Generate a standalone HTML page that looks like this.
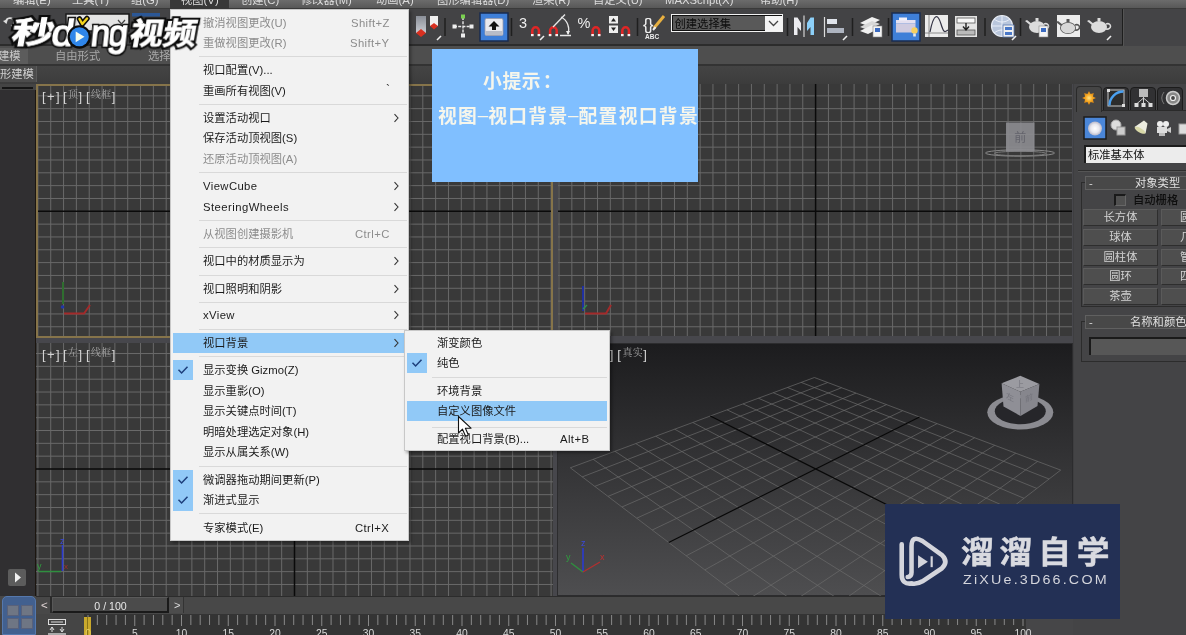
<!DOCTYPE html><html lang="zh"><head><meta charset="utf-8"><title>3ds Max</title><style>
*{box-sizing:border-box}
html,body{margin:0;padding:0}
body{width:1186px;height:635px;overflow:hidden;position:relative;background:#444446;font-family:"Liberation Sans","Noto Sans CJK SC",sans-serif;font-size:12px;color:#ddd}
.a{position:absolute}
.t,.mi,.sc,.btn,svg{will-change:transform}
.t{position:absolute;white-space:nowrap;line-height:1}
.mi{position:absolute;left:203px;white-space:nowrap;font-size:11.3px;line-height:14px;height:14px;color:#1b1b1b}
.dis{color:#8c8c8c !important}
.sc{position:absolute;right:19px;white-space:nowrap;letter-spacing:0.4px;font-size:11.3px;line-height:14px;height:14px;color:#1b1b1b}
.sep{position:absolute;left:199px;width:208px;height:1px;background:#d9d9d9}
.chk{position:absolute;background:#91c9f7}
.btn{position:absolute;background:#4e4e4e;border-top:1px solid #5c5c5c;border-left:1px solid #5a5a5a;border-bottom:1px solid #2e2e2e;border-right:1px solid #2e2e2e;color:#d2d2d2;font-size:11.3px;line-height:14px;text-align:center;white-space:nowrap;overflow:hidden}
</style></head><body><div id="root" style="position:absolute;left:0;top:0;width:1186px;height:635px;overflow:hidden;"><div class="a" style="left:0;top:0;width:1186px;height:8px;background:linear-gradient(#6c6c6c,#585858)"></div><div class="a" style="left:0;top:8px;width:1186px;height:1px;background:#3a3a3a"></div><div class="a" style="left:170px;top:0;width:59px;height:9px;background:#383838"></div><div class="t" style="left:13px;top:-7.4px;font-size:11.3px;line-height:14px;color:#dcdcdc">编辑(E)</div><div class="t" style="left:72px;top:-7.4px;font-size:11.3px;line-height:14px;color:#dcdcdc">工具(T)</div><div class="t" style="left:131px;top:-7.4px;font-size:11.3px;line-height:14px;color:#dcdcdc">组(G)</div><div class="t" style="left:181px;top:-7.4px;font-size:11.3px;line-height:14px;color:#dcdcdc">视图(V)</div><div class="t" style="left:241px;top:-7.4px;font-size:11.3px;line-height:14px;color:#dcdcdc">创建(C)</div><div class="t" style="left:301px;top:-7.4px;font-size:11.3px;line-height:14px;color:#dcdcdc">修改器(M)</div><div class="t" style="left:376px;top:-7.4px;font-size:11.3px;line-height:14px;color:#dcdcdc">动画(A)</div><div class="t" style="left:437px;top:-7.4px;font-size:11.3px;line-height:14px;color:#dcdcdc">图形编辑器(D)</div><div class="t" style="left:532px;top:-7.4px;font-size:11.3px;line-height:14px;color:#dcdcdc">渲染(R)</div><div class="t" style="left:593px;top:-7.4px;font-size:11.3px;line-height:14px;color:#dcdcdc">自定义(U)</div><div class="t" style="left:665px;top:-7.4px;font-size:11.3px;line-height:14px;color:#dcdcdc">MAXScript(X)</div><div class="t" style="left:760px;top:-7.4px;font-size:11.3px;line-height:14px;color:#dcdcdc">帮助(H)</div><div class="a" style="left:0;top:9px;width:1123px;height:36px;background:#434345"></div><div class="a" style="left:0;top:44px;width:1123px;height:2px;background:#2c2c2c"></div><div class="a" style="left:1121.5px;top:9px;width:1.5px;height:36px;background:#1e1e1e"></div><div class="a" style="left:1123px;top:9px;width:63px;height:37px;background:#444446;border-left:1px solid #545454"></div><div class="a" style="left:0;top:46px;width:1186px;height:18px;background:#4e4e4e"></div><div class="a" style="left:0;top:64px;width:1186px;height:2px;background:#333"></div><div class="a" style="left:0;top:66px;width:1186px;height:18px;background:linear-gradient(#444,#3c3c3c)"></div><div class="a" style="left:0;top:48px;width:28px;height:16px;background:#5c5c5c"></div><div class="t" style="left:-2.5px;top:49px;font-size:11.3px;line-height:14px;color:#c8c8c8">建模</div><div class="t" style="left:55px;top:49px;font-size:11.3px;line-height:14px;color:#a8a8a8">自由形式</div><div class="t" style="left:148px;top:49px;font-size:11.3px;line-height:14px;color:#a8a8a8">选择</div><div class="a" style="left:0;top:66px;width:37px;height:16px;background:#4c4c4c;border-right:1px solid #5a5a5a"></div><div class="t" style="left:-0.5px;top:67px;font-size:11.3px;line-height:14px;color:#cfcfcf">形建模</div><div class="a" style="left:0;top:84px;width:36px;height:514px;background:#444"></div><div class="a" style="left:0;top:90px;width:36px;height:507px;background:#1c1610"></div><div class="a" style="left:0;top:90px;width:34.5px;height:507px;background:#302f31"></div><div class="a" style="left:2px;top:87px;width:31px;height:2px;background:#151515"></div><div class="a" style="left:8px;top:569px;width:18px;height:17px;background:#5c5c5c;border-radius:2px"></div><svg class="a" style="left:8px;top:569px" width="18" height="17"><path d="M7 3.5 L13 8.5 L7 13.5 Z" fill="#f0f0f0"/></svg><svg class="a" style="left:0;top:0" width="1186" height="635" viewBox="0 0 1186 635"><defs><linearGradient id="pg" x1="0" y1="0" x2="0" y2="1"><stop offset="0" stop-color="#1c1c1e"/><stop offset="1" stop-color="#4e4e50"/></linearGradient><clipPath id="cbr"><rect x="558" y="344" width="514" height="252"/></clipPath></defs><rect x="36" y="84" width="1038" height="514" fill="#47474c"/><rect x="36" y="84" width="517" height="254" fill="#393939"/><path d="M37.90 84V338M50.73 84V338M63.56 84V338M76.39 84V338M89.22 84V338M102.05 84V338M114.88 84V338M127.71 84V338M140.54 84V338M153.37 84V338M166.20 84V338M179.03 84V338M191.86 84V338M204.69 84V338M217.52 84V338M230.35 84V338M243.18 84V338M256.01 84V338M268.84 84V338M281.67 84V338M307.33 84V338M320.16 84V338M332.99 84V338M345.82 84V338M358.65 84V338M371.48 84V338M384.31 84V338M397.14 84V338M409.97 84V338M422.80 84V338M435.63 84V338M448.46 84V338M461.29 84V338M474.12 84V338M486.95 84V338M499.78 84V338M512.61 84V338M525.44 84V338M538.27 84V338M551.10 84V338M36 95.83H553M36 108.66H553M36 121.49H553M36 134.32H553M36 147.15H553M36 159.98H553M36 172.81H553M36 185.64H553M36 198.47H553M36 224.13H553M36 236.96H553M36 249.79H553M36 262.62H553M36 275.45H553M36 288.28H553M36 301.11H553M36 313.94H553M36 326.77H553" stroke="#696969" stroke-width="1" fill="none"/><path d="M36 211.3H553M294.5 84V338" stroke="#0a0a0a" stroke-width="1.5" fill="none"/><rect x="37" y="85" width="515" height="252" fill="none" stroke="#86744a" stroke-width="2"/><rect x="558" y="84" width="514" height="252" fill="#393939"/><path d="M559.00 84V336M571.83 84V336M584.66 84V336M597.49 84V336M610.32 84V336M623.15 84V336M635.98 84V336M648.81 84V336M661.64 84V336M674.47 84V336M687.30 84V336M700.13 84V336M712.96 84V336M725.79 84V336M738.62 84V336M751.45 84V336M764.28 84V336M777.11 84V336M789.94 84V336M802.77 84V336M828.43 84V336M841.26 84V336M854.09 84V336M866.92 84V336M879.75 84V336M892.58 84V336M905.41 84V336M918.24 84V336M931.07 84V336M943.90 84V336M956.73 84V336M969.56 84V336M982.39 84V336M995.22 84V336M1008.05 84V336M1020.88 84V336M1033.71 84V336M1046.54 84V336M1059.37 84V336M558 95.83H1072M558 108.66H1072M558 121.49H1072M558 134.32H1072M558 147.15H1072M558 159.98H1072M558 172.81H1072M558 185.64H1072M558 198.47H1072M558 224.13H1072M558 236.96H1072M558 249.79H1072M558 262.62H1072M558 275.45H1072M558 288.28H1072M558 301.11H1072M558 313.94H1072M558 326.77H1072" stroke="#696969" stroke-width="1" fill="none"/><path d="M558 211.3H1072M815.6 84V336" stroke="#0a0a0a" stroke-width="1.5" fill="none"/><rect x="36" y="343" width="517" height="253" fill="#393939"/><path d="M37.90 343V596M50.73 343V596M63.56 343V596M76.39 343V596M89.22 343V596M102.05 343V596M114.88 343V596M127.71 343V596M140.54 343V596M153.37 343V596M166.20 343V596M179.03 343V596M191.86 343V596M204.69 343V596M217.52 343V596M230.35 343V596M243.18 343V596M256.01 343V596M268.84 343V596M281.67 343V596M307.33 343V596M320.16 343V596M332.99 343V596M345.82 343V596M358.65 343V596M371.48 343V596M384.31 343V596M397.14 343V596M409.97 343V596M422.80 343V596M435.63 343V596M448.46 343V596M461.29 343V596M474.12 343V596M486.95 343V596M499.78 343V596M512.61 343V596M525.44 343V596M538.27 343V596M551.10 343V596M36 353.53H553M36 366.36H553M36 379.19H553M36 392.02H553M36 404.85H553M36 417.68H553M36 430.51H553M36 443.34H553M36 456.17H553M36 481.83H553M36 494.66H553M36 507.49H553M36 520.32H553M36 533.15H553M36 545.98H553M36 558.81H553M36 571.64H553M36 584.47H553" stroke="#696969" stroke-width="1" fill="none"/><path d="M36 469H553M294.5 343V596" stroke="#0a0a0a" stroke-width="1.5" fill="none"/><rect x="557" y="343" width="516" height="253.500" fill="#2c2c2e"/><rect x="558" y="344" width="514" height="251" fill="url(#pg)"/><g clip-path="url(#cbr)"><path d="M814.4 377.5L570.3 467.8M814.4 377.5L1060.7 470.1M827.7 382.5L582.2 476.9M801.2 382.4L1049.1 479.0M841.6 387.7L594.8 486.4M787.5 387.5L1036.8 488.4M856.0 393.1L608.0 496.4M773.2 392.7L1024.0 498.3M870.9 398.8L621.9 507.0M758.4 398.2L1010.4 508.8M886.5 404.6L636.7 518.2M743.0 403.9L996.0 519.8M902.7 410.7L652.2 530.0M727.0 409.8L980.9 531.4M937.1 423.6L686.2 555.8M692.9 422.5L947.7 556.9M955.5 430.5L704.8 569.9M674.7 429.2L929.6 570.8M974.7 437.7L724.6 584.9M655.7 436.2L910.3 585.7M994.7 445.3L745.7 600.9M635.8 443.6L889.7 601.5M1015.7 453.2L768.3 618.1M615.0 451.3L867.6 618.5M1037.6 461.4L792.5 636.5M593.2 459.3L843.9 636.7M1060.7 470.1L818.5 656.2M570.3 467.8L818.5 656.2" stroke="#6c6c6c" stroke-width="0.7" fill="none"/><path d="M919.5 417.0L668.7 542.5M710.3 416.0L964.8 543.8" stroke="#080808" stroke-width="1.2" fill="none"/></g><ellipse cx="1020.3" cy="412.3" rx="33" ry="17.3" fill="#8b8b91"/><ellipse cx="1020.3" cy="411.3" rx="25.5" ry="13" fill="#26262a"/><path d="M1020.3 375.8L1039.4 384L1020.3 391.8L1001.6 383.3Z" fill="#9b9ba1"/><path d="M1001.6 383.3L1020.3 391.8L1020.5 416L1003.5 406.6Z" fill="#8f8f96"/><path d="M1039.4 384L1020.3 391.8L1020.5 416L1037.5 406Z" fill="#86868d"/><g font-family='"Liberation Sans","Noto Sans CJK SC",sans-serif' font-size="8" fill="#74747c"><text x="1016" y="386.5" transform="rotate(0)">上</text><text transform="translate(1006,398) skewY(27)">左</text><text transform="translate(1025,402.5) skewY(-24)">前</text></g><ellipse cx="1020" cy="153" rx="34.5" ry="3.2" fill="none" stroke="#8a8a8a" stroke-width="1"/><ellipse cx="1020" cy="153.5" rx="26" ry="2.2" fill="none" stroke="#7a7a7a" stroke-width="1"/><rect x="1006" y="122.5" width="28.5" height="29" fill="#8e8e93" fill-opacity="0.88"/><text x="1020.3" y="142" font-size="12" text-anchor="middle" fill="#64646c" font-family='"Liberation Sans","Noto Sans CJK SC",sans-serif'>前</text><path d="M63 304V282" stroke="#2f6e2f" stroke-width="2" fill="none"/><path d="M64 313.5H84L90 305" stroke="#a32a2a" stroke-width="2" fill="none"/><circle cx="62.5" cy="307" r="1.8" fill="#2038a8"/><path d="M583 311V286" stroke="#2030a0" stroke-width="2" fill="none"/><path d="M585 313.5H606L611 305" stroke="#a32a2a" stroke-width="2" fill="none"/><path d="M583 309L587 305" stroke="#2f8e4f" stroke-width="1.5"/><path d="M62.5 571V545" stroke="#2a3ad0" stroke-width="1.6" fill="none"/><path d="M38.5 571.5H61" stroke="#2f8f3f" stroke-width="1.5" fill="none"/><text x="37" y="569" font-size="9" fill="#2f9f3f" font-family='"Liberation Sans","Noto Sans CJK SC",sans-serif'>y</text><text x="60" y="544" font-size="9" fill="#3a4ae0" font-family='"Liberation Sans","Noto Sans CJK SC",sans-serif'>z</text><text x="64" y="569" font-size="8" fill="#a03030" font-family='"Liberation Sans","Noto Sans CJK SC",sans-serif'>x</text><path d="M583 572V548" stroke="#2a3ad0" stroke-width="1.6" fill="none"/><path d="M583 572L571 563" stroke="#2f8f3f" stroke-width="1.4" fill="none"/><path d="M583 572L600 562" stroke="#b03030" stroke-width="1.4" fill="none"/><text x="581" y="546" font-size="9" fill="#3a4ae0" font-family='"Liberation Sans","Noto Sans CJK SC",sans-serif'>z</text><text x="566" y="560" font-size="9" fill="#2f9f3f" font-family='"Liberation Sans","Noto Sans CJK SC",sans-serif'>y</text><text x="600" y="560" font-size="9" fill="#c03030" font-family='"Liberation Sans","Noto Sans CJK SC",sans-serif'>x</text></svg><div class="t" style="left:41.5px;top:88.5px;font-size:13px;line-height:15px;color:#d4d4d4;letter-spacing:1.4px">[+]<span style="margin-left:2px">[</span><span style="font-size:10px;position:relative;top:-3px;color:#a6a6a6;letter-spacing:0.4px;font-family:'Liberation Serif','Noto Serif CJK SC',serif">顶</span>]<span style="margin-left:2.5px">[</span><span style="font-size:10px;position:relative;top:-3px;color:#a6a6a6;letter-spacing:0.4px;font-family:'Liberation Serif','Noto Serif CJK SC',serif">线框</span>]</div><div class="t" style="left:561px;top:89px;font-size:13px;line-height:15px;color:#d4d4d4;letter-spacing:1.4px">[+]<span style="margin-left:2px">[</span><span style="font-size:10px;position:relative;top:-3px;color:#a6a6a6;letter-spacing:0.4px;font-family:'Liberation Serif','Noto Serif CJK SC',serif">前</span>]<span style="margin-left:2.5px">[</span><span style="font-size:10px;position:relative;top:-3px;color:#a6a6a6;letter-spacing:0.4px;font-family:'Liberation Serif','Noto Serif CJK SC',serif">线框</span>]</div><div class="t" style="left:41.5px;top:346.5px;font-size:13px;line-height:15px;color:#d4d4d4;letter-spacing:1.4px">[+]<span style="margin-left:2px">[</span><span style="font-size:10px;position:relative;top:-3px;color:#a6a6a6;letter-spacing:0.4px;font-family:'Liberation Serif','Noto Serif CJK SC',serif">左</span>]<span style="margin-left:2.5px">[</span><span style="font-size:10px;position:relative;top:-3px;color:#a6a6a6;letter-spacing:0.4px;font-family:'Liberation Serif','Noto Serif CJK SC',serif">线框</span>]</div><div class="t" style="left:563px;top:346.5px;font-size:13px;line-height:15px;color:#d4d4d4;letter-spacing:1.4px">[+]<span style="margin-left:2px">[</span><span style="font-size:10px;position:relative;top:-3px;color:#a6a6a6;letter-spacing:0.4px;font-family:'Liberation Serif','Noto Serif CJK SC',serif">透视</span>]<span style="margin-left:2.5px">[</span><span style="font-size:10px;position:relative;top:-3px;color:#a6a6a6;letter-spacing:0.4px;font-family:'Liberation Serif','Noto Serif CJK SC',serif">真实</span>]</div><div class="a" style="left:1073px;top:84px;width:113px;height:551px;background:#444446"></div><div class="a" style="left:1073px;top:84px;width:1px;height:514px;background:#3e3e40"></div><div class="a" style="left:1076px;top:86px;width:26px;height:26px;background:#454545;border:1px solid #2a2a2a;border-bottom:none;border-radius:4px 4px 0 0"></div><div class="a" style="left:1103px;top:87px;width:26px;height:24px;background:#313133;border:1.5px solid #1c1c1c;border-radius:4px 4px 0 0"></div><div class="a" style="left:1130px;top:87px;width:26px;height:24px;background:#313133;border:1.5px solid #1c1c1c;border-radius:4px 4px 0 0"></div><div class="a" style="left:1157px;top:87px;width:26px;height:24px;background:#313133;border:1.5px solid #1c1c1c;border-radius:4px 4px 0 0"></div><div class="a" style="left:1102px;top:110px;width:84px;height:1px;background:#2a2a2a"></div><svg class="a" style="left:1073px;top:84px" width="113" height="60" viewBox="1073 84 113 60"><defs><radialGradient id="sg"><stop offset="0" stop-color="#ffe58a"/><stop offset="0.5" stop-color="#f6a823"/><stop offset="1" stop-color="#c97812"/></radialGradient><radialGradient id="sph"><stop offset="0" stop-color="#ffffff"/><stop offset="0.6" stop-color="#e8e8ee"/><stop offset="1" stop-color="#b8b8c8"/></radialGradient></defs><polygon points="1089.0,91.0 1090.6,94.1 1093.9,93.1 1092.9,96.4 1096.0,98.0 1092.9,99.6 1093.9,102.9 1090.6,101.9 1089.0,105.0 1087.4,101.9 1084.1,102.9 1085.1,99.6 1082.0,98.0 1085.1,96.4 1084.1,93.1 1087.4,94.1" fill="url(#sg)"/><rect x="1108" y="90" width="16" height="16" fill="#2c2c2c" stroke="#c8c8c8" stroke-width="1"/><path d="M1109.5 105.5A14 14 0 0 1 1123.5 91.5" stroke="#4aa0f0" stroke-width="2.4" fill="none"/><rect x="1107" y="89" width="3" height="3" fill="#ddd"/><rect x="1122" y="104" width="3" height="3" fill="#ddd"/><rect x="1139" y="89" width="9" height="8" fill="#bbb"/><path d="M1143.5 97V103M1143.5 98L1136.5 104M1143.5 98L1150.5 104" stroke="#ccc" stroke-width="1" fill="none"/><rect x="1134.5" y="103" width="4" height="4" fill="#ddd"/><rect x="1141.5" y="103" width="4" height="4" fill="#ddd"/><rect x="1148.5" y="103" width="4" height="4" fill="#ddd"/><circle cx="1173" cy="98" r="6.5" fill="#888" stroke="#ccc" stroke-width="1.5"/><circle cx="1173" cy="98" r="2.5" fill="#444" stroke="#eee" stroke-width="1.2"/><path d="M1164 92A10 10 0 0 0 1164 104" stroke="#777" stroke-width="1" fill="none"/><rect x="1084" y="117" width="22" height="22" fill="#4a86d8" stroke="#1c1c1c" stroke-width="1.5"/><circle cx="1095" cy="128.5" r="7" fill="url(#sph)"/><circle cx="1116" cy="125" r="5" fill="#ddd" stroke="#aaa"/><rect x="1117" y="127" width="8" height="8" fill="#ccc" stroke="#999"/><path d="M1144 120.500L1147.500 123.500L1145.500 133.500L1134.500 127Z" fill="#ecece0"/><ellipse cx="1140" cy="130.300" rx="6" ry="2.200" transform="rotate(30 1140 130.300)" fill="#d8d8a8"/><circle cx="1160" cy="124" r="3" fill="#eee"/><circle cx="1166" cy="124" r="3" fill="#eee"/><rect x="1157" y="127" width="10" height="6" fill="#ddd"/><path d="M1167 129L1171 127V133L1167 131Z" fill="#ccc"/><rect x="1159" y="133" width="6" height="3" fill="#bbb"/><rect x="1179" y="124" width="8" height="10" fill="#ddd" stroke="#999"/></svg><div class="a" style="left:1084px;top:145px;width:110px;height:18px;background:#ececec;border-top:2px solid #1c1c1c;border-left:2px solid #1c1c1c"></div><div class="t" style="left:1088px;top:148px;font-size:11.3px;line-height:14px;color:#111">标准基本体</div><div class="a" style="left:1078px;top:170px;width:108px;height:1px;background:#2e2e2e"></div><div class="a" style="left:1078px;top:171px;width:108px;height:1px;background:#555"></div><div class="a" style="left:1081px;top:182px;width:110px;height:125px;border:1px solid #2c2c2c;border-right:none"></div><div class="a" style="left:1085px;top:176px;width:110px;height:14px;background:#484848;border:1px solid #606060"></div><div class="t" style="left:1089px;top:176px;font-size:11.3px;line-height:14px;color:#d8d8d8">-</div><div class="t" style="left:1135px;top:176px;font-size:11.3px;line-height:14px;color:#e0e0e0">对象类型</div><div class="a" style="left:1114px;top:194px;width:12px;height:12px;background:#505050;border-top:2px solid #1a1a1a;border-left:2px solid #1a1a1a;border-right:1px solid #666;border-bottom:1px solid #666"></div><div class="t" style="left:1133px;top:193px;font-size:11.3px;line-height:14px;color:#0e0e0e;font-weight:500">自动栅格</div><div class="btn" style="left:1083px;top:209.4px;width:75px;height:16.5px">长方体</div><div class="btn" style="left:1161px;top:209.4px;width:40px;height:16.5px;text-align:left;padding-left:18px">圆</div><div class="btn" style="left:1083px;top:229.0px;width:75px;height:16.5px">球体</div><div class="btn" style="left:1161px;top:229.0px;width:40px;height:16.5px;text-align:left;padding-left:18px">几</div><div class="btn" style="left:1083px;top:248.5px;width:75px;height:16.5px">圆柱体</div><div class="btn" style="left:1161px;top:248.5px;width:40px;height:16.5px;text-align:left;padding-left:18px">管</div><div class="btn" style="left:1083px;top:268.1px;width:75px;height:16.5px">圆环</div><div class="btn" style="left:1161px;top:268.1px;width:40px;height:16.5px;text-align:left;padding-left:18px">四</div><div class="btn" style="left:1083px;top:287.6px;width:75px;height:16.5px">茶壶</div><div class="btn" style="left:1161px;top:287.6px;width:40px;height:16.5px;text-align:left;padding-left:18px"></div><div class="a" style="left:1081px;top:321px;width:110px;height:41px;border:1px solid #2c2c2c;border-right:none"></div><div class="a" style="left:1085px;top:315px;width:110px;height:14px;background:#484848;border:1px solid #606060"></div><div class="t" style="left:1089px;top:315px;font-size:11.3px;line-height:14px;color:#d8d8d8">-</div><div class="t" style="left:1130px;top:315px;font-size:11.3px;line-height:14px;color:#e0e0e0">名称和颜色</div><div class="a" style="left:1089px;top:337px;width:110px;height:18px;background:#575757;border-top:2px solid #1a1a1a;border-left:2px solid #1a1a1a"></div><div class="a" style="left:0;top:596px;width:1073px;height:18px;background:#484848"></div><div class="a" style="left:36px;top:596px;width:1037px;height:1px;background:#2c2c2c"></div><div class="a" style="left:50px;top:597px;width:2px;height:16px;background:#2a2a2a"></div><div class="a" style="left:169px;top:597px;width:15px;height:16px;background:#4c4c4c;border-right:1px solid #333"></div><div class="a" style="left:52px;top:597px;width:117px;height:16px;background:#4b4b4b;border-top:1px solid #5a5a5a;border-left:1px solid #585858;border-right:2px solid #1a1a1a;border-bottom:2px solid #1a1a1a"></div><div class="t" style="left:40.5px;top:599px;font-size:11.5px;line-height:12px;color:#e0d4d4">&lt;</div><div class="t" style="left:174px;top:599px;font-size:11px;line-height:12px;color:#ddd">&gt;</div><div class="t" style="left:52px;width:117px;text-align:center;top:599.5px;font-size:10.6px;line-height:12px;color:#e6e6e6;font-weight:500">0 / 100</div><div class="a" style="left:2px;top:596px;width:34px;height:39px;background:#42608f;border-radius:5px 5px 0 0;border:1px solid #5578ad"></div><div class="a" style="left:7px;top:605px;width:12px;height:11px;background:#6f7684;border:1px solid #59617a"></div><div class="a" style="left:21px;top:605px;width:12px;height:11px;background:#6f7684;border:1px solid #59617a"></div><div class="a" style="left:7px;top:618px;width:12px;height:11px;background:#6f7684;border:1px solid #59617a"></div><div class="a" style="left:21px;top:618px;width:12px;height:11px;background:#6f7684;border:1px solid #59617a"></div><div class="a" style="left:36px;top:614px;width:990px;height:21px;background:#343434"></div><div class="a" style="left:1026px;top:614px;width:47px;height:21px;background:#464648"></div><div class="a" style="left:36px;top:614px;width:48px;height:21px;background:#454545"></div><svg class="a" style="left:0;top:612px" width="1186" height="23" viewBox="0 612 1186 23"><path d="M88.00 615V626M97.35 615V625M106.70 615V625M116.05 615V625M125.40 615V625M134.75 615V626M144.10 615V625M153.45 615V625M162.80 615V625M172.15 615V625M181.50 615V626M190.85 615V625M200.20 615V625M209.55 615V625M218.90 615V625M228.25 615V626M237.60 615V625M246.95 615V625M256.30 615V625M265.65 615V625M275.00 615V626M284.35 615V625M293.70 615V625M303.05 615V625M312.40 615V625M321.75 615V626M331.10 615V625M340.45 615V625M349.80 615V625M359.15 615V625M368.50 615V626M377.85 615V625M387.20 615V625M396.55 615V625M405.90 615V625M415.25 615V626M424.60 615V625M433.95 615V625M443.30 615V625M452.65 615V625M462.00 615V626M471.35 615V625M480.70 615V625M490.05 615V625M499.40 615V625M508.75 615V626M518.10 615V625M527.45 615V625M536.80 615V625M546.15 615V625M555.50 615V626M564.85 615V625M574.20 615V625M583.55 615V625M592.90 615V625M602.25 615V626M611.60 615V625M620.95 615V625M630.30 615V625M639.65 615V625M649.00 615V626M658.35 615V625M667.70 615V625M677.05 615V625M686.40 615V625M695.75 615V626M705.10 615V625M714.45 615V625M723.80 615V625M733.15 615V625M742.50 615V626M751.85 615V625M761.20 615V625M770.55 615V625M779.90 615V625M789.25 615V626M798.60 615V625M807.95 615V625M817.30 615V625M826.65 615V625M836.00 615V626M845.35 615V625M854.70 615V625M864.05 615V625M873.40 615V625M882.75 615V626M892.10 615V625M901.45 615V625M910.80 615V625M920.15 615V625M929.50 615V626M938.85 615V625M948.20 615V625M957.55 615V625M966.90 615V625M976.25 615V626M985.60 615V625M994.95 615V625M1004.30 615V625M1013.65 615V625M1023.00 615V626" stroke="#888" stroke-width="1" fill="none"/><rect x="84" y="617" width="7" height="18" fill="#c9a92c"/><path d="M87.5 617V635" stroke="#8a7418" stroke-width="1"/><text x="88.0" y="637.3" font-size="10.3" text-anchor="middle" fill="#e8d060" font-family='"Liberation Sans","Noto Sans CJK SC",sans-serif'>0</text><text x="134.8" y="637.3" font-size="10.3" text-anchor="middle" fill="#d8d8d8" font-family='"Liberation Sans","Noto Sans CJK SC",sans-serif'>5</text><text x="181.5" y="637.3" font-size="10.3" text-anchor="middle" fill="#d8d8d8" font-family='"Liberation Sans","Noto Sans CJK SC",sans-serif'>10</text><text x="228.2" y="637.3" font-size="10.3" text-anchor="middle" fill="#d8d8d8" font-family='"Liberation Sans","Noto Sans CJK SC",sans-serif'>15</text><text x="275.0" y="637.3" font-size="10.3" text-anchor="middle" fill="#d8d8d8" font-family='"Liberation Sans","Noto Sans CJK SC",sans-serif'>20</text><text x="321.8" y="637.3" font-size="10.3" text-anchor="middle" fill="#d8d8d8" font-family='"Liberation Sans","Noto Sans CJK SC",sans-serif'>25</text><text x="368.5" y="637.3" font-size="10.3" text-anchor="middle" fill="#d8d8d8" font-family='"Liberation Sans","Noto Sans CJK SC",sans-serif'>30</text><text x="415.2" y="637.3" font-size="10.3" text-anchor="middle" fill="#d8d8d8" font-family='"Liberation Sans","Noto Sans CJK SC",sans-serif'>35</text><text x="462.0" y="637.3" font-size="10.3" text-anchor="middle" fill="#d8d8d8" font-family='"Liberation Sans","Noto Sans CJK SC",sans-serif'>40</text><text x="508.8" y="637.3" font-size="10.3" text-anchor="middle" fill="#d8d8d8" font-family='"Liberation Sans","Noto Sans CJK SC",sans-serif'>45</text><text x="555.5" y="637.3" font-size="10.3" text-anchor="middle" fill="#d8d8d8" font-family='"Liberation Sans","Noto Sans CJK SC",sans-serif'>50</text><text x="602.2" y="637.3" font-size="10.3" text-anchor="middle" fill="#d8d8d8" font-family='"Liberation Sans","Noto Sans CJK SC",sans-serif'>55</text><text x="649.0" y="637.3" font-size="10.3" text-anchor="middle" fill="#d8d8d8" font-family='"Liberation Sans","Noto Sans CJK SC",sans-serif'>60</text><text x="695.8" y="637.3" font-size="10.3" text-anchor="middle" fill="#d8d8d8" font-family='"Liberation Sans","Noto Sans CJK SC",sans-serif'>65</text><text x="742.5" y="637.3" font-size="10.3" text-anchor="middle" fill="#d8d8d8" font-family='"Liberation Sans","Noto Sans CJK SC",sans-serif'>70</text><text x="789.2" y="637.3" font-size="10.3" text-anchor="middle" fill="#d8d8d8" font-family='"Liberation Sans","Noto Sans CJK SC",sans-serif'>75</text><text x="836.0" y="637.3" font-size="10.3" text-anchor="middle" fill="#d8d8d8" font-family='"Liberation Sans","Noto Sans CJK SC",sans-serif'>80</text><text x="882.8" y="637.3" font-size="10.3" text-anchor="middle" fill="#d8d8d8" font-family='"Liberation Sans","Noto Sans CJK SC",sans-serif'>85</text><text x="929.5" y="637.3" font-size="10.3" text-anchor="middle" fill="#d8d8d8" font-family='"Liberation Sans","Noto Sans CJK SC",sans-serif'>90</text><text x="976.2" y="637.3" font-size="10.3" text-anchor="middle" fill="#d8d8d8" font-family='"Liberation Sans","Noto Sans CJK SC",sans-serif'>95</text><text x="1023.0" y="637.3" font-size="10.3" text-anchor="middle" fill="#d8d8d8" font-family='"Liberation Sans","Noto Sans CJK SC",sans-serif'>100</text><rect x="48.5" y="619.5" width="17" height="5" fill="none" stroke="#ddd" stroke-width="1"/><path d="M51 622H63" stroke="#ddd"/><path d="M52 627V632M50 630L52 627L54 630M62 627V632M60 629L62 632L64 629" stroke="#ddd" fill="none"/><rect x="48" y="633" width="18" height="2" fill="#aaa"/></svg><svg class="a" style="left:0;top:9px" width="1186" height="37" viewBox="0 9 1186 37"><defs><linearGradient id="gg" x1="0" y1="0" x2="0" y2="1"><stop offset="0" stop-color="#8a8f98"/><stop offset="1" stop-color="#c9ccd2"/></linearGradient></defs><path d="M6 22A4 4 0 1 1 11 26" stroke="#ddd" stroke-width="1.6" fill="none"/><path d="M3 21L6.5 24L8 19Z" fill="#ddd"/><rect x="66" y="14" width="63" height="17" fill="#e4e4e4" stroke="#1a1a1a" stroke-width="1.5"/><path d="M118 20L121.5 24L125 20" stroke="#444" stroke-width="1.2" fill="none"/><rect x="132" y="13" width="28" height="3.5" fill="#2b5796"/><rect x="416" y="16" width="10" height="17" fill="url(#gg)"/><path d="M416 33L421 29L426 33L421 37Z" fill="#d83020"/><rect x="430" y="16" width="8" height="10" fill="#f0f0f0"/><path d="M430 26L434 23L438 26L434 29.5Z" fill="#d83020"/><path d="M437 40L441 36" stroke="#eee" stroke-width="1.6"/><path d="M445 18V36" stroke="#1f1f1f" stroke-width="1.5"/><path d="M454 26.5H472M463 17V36" stroke="#e8e8e8" stroke-width="1.4" stroke-dasharray="3 1.2"/><rect x="461" y="14.5" width="4" height="4" fill="#7ad050"/><rect x="452.5" y="24.5" width="4" height="4" fill="#eee"/><rect x="469.5" y="24.5" width="4" height="4" fill="#eee"/><rect x="461" y="33.5" width="4" height="4" fill="#eee"/><rect x="480" y="13" width="28" height="28" fill="#3f7fd8" stroke="#1a2c50" stroke-width="1.5"/><rect x="485" y="18.5" width="18" height="17" rx="1.5" fill="#e9e9ee" stroke="#99a" stroke-width="0.8"/><rect x="485.5" y="31" width="17" height="4" fill="#b8bcc8"/><path d="M494 21L499.5 26.5H496V30H492V26.5H488.5Z" fill="#111"/><path d="M511.5 18V36" stroke="#1f1f1f" stroke-width="1.5"/><text x="519" y="27.5" font-size="14.5" fill="#eee" font-family='"Liberation Sans","Noto Sans CJK SC",sans-serif'>3</text><path d="M532.3 36V30.6A3.3 3.3 0 0 1 538.9 30.6V36" stroke="#e02626" stroke-width="2.5" fill="none"/><rect x="531" y="34" width="2.6" height="2.2" fill="#f0f0f0"/><rect x="537.6" y="34" width="2.6" height="2.2" fill="#f0f0f0"/><path d="M540 40L544 36" stroke="#eee" stroke-width="1.6"/><path d="M550.0999999999999 36V30.6A3.3 3.3 0 0 1 556.6999999999999 30.6V36" stroke="#e02626" stroke-width="2.5" fill="none"/><rect x="548.8" y="34" width="2.6" height="2.2" fill="#f0f0f0"/><rect x="555.4" y="34" width="2.6" height="2.2" fill="#f0f0f0"/><path d="M553 27L565 14.5" stroke="#e8e8e8" stroke-width="1.3"/><path d="M561 17A14 14 0 0 1 568 34" stroke="#e8e8e8" stroke-width="1.2" fill="none"/><path d="M560 35.5H571" stroke="#e8e8e8" stroke-width="1.5"/><path d="M566 31L568 35L570 31Z" fill="#eee"/><text x="577.5" y="27.5" font-size="14.5" fill="#eee" font-family='"Liberation Sans","Noto Sans CJK SC",sans-serif'>%</text><path d="M592.5999999999999 36V30.6A3.3 3.3 0 0 1 599.1999999999999 30.6V36" stroke="#e02626" stroke-width="2.5" fill="none"/><rect x="591.3" y="34" width="2.6" height="2.2" fill="#f0f0f0"/><rect x="597.9" y="34" width="2.6" height="2.2" fill="#f0f0f0"/><rect x="609" y="16" width="9" height="7.5" fill="#eee"/><rect x="609" y="25.5" width="9" height="7.5" fill="#eee"/><path d="M611 21.5L613.5 18L616 21.5ZM611 27.5L613.5 31L616 27.5Z" fill="#222"/><path d="M622.3 36V30.6A3.3 3.3 0 0 1 628.9 30.6V36" stroke="#e02626" stroke-width="2.5" fill="none"/><rect x="621" y="34" width="2.6" height="2.2" fill="#f0f0f0"/><rect x="627.6" y="34" width="2.6" height="2.2" fill="#f0f0f0"/><path d="M637.5 18V36" stroke="#1f1f1f" stroke-width="1.5"/><text x="643" y="30" font-size="17" fill="#eee" font-family='"Liberation Sans","Noto Sans CJK SC",sans-serif' letter-spacing="-1">{}</text><path d="M654 28L664 16" stroke="#e8b040" stroke-width="3"/><path d="M653 30L655.5 27" stroke="#eee" stroke-width="2"/><text x="645" y="38.5" font-size="6.5" font-weight="bold" fill="#eee" font-family='"Liberation Sans","Noto Sans CJK SC",sans-serif'>ABC</text><rect x="671.5" y="14.5" width="111" height="17" fill="#595959" stroke="#f2f2f2" stroke-width="1"/><rect x="672.5" y="15.5" width="109" height="15" fill="none" stroke="#111" stroke-width="1"/><rect x="765" y="16" width="17" height="15" fill="#f4f4f4"/><path d="M769 21L773.5 25.5L778 21" stroke="#444" stroke-width="1.3" fill="none"/><text x="674.5" y="27.5" font-size="11.3" fill="#0c0c0c" font-family='"Liberation Sans","Noto Sans CJK SC",sans-serif'>创建选择集</text><path d="M787.5 18V36" stroke="#1f1f1f" stroke-width="1.5"/><path d="M794 17.500H797.500L801 23V31L797.500 27V35H794Z" fill="#ececf0"/><path d="M814 17.500H810.500L807 23V31L810.500 27V35H814Z" fill="#8ccff8"/><path d="M804 15.500V37" stroke="#c8c8c8" stroke-width="1.3"/><path d="M824.5 17V37" stroke="#ddd" stroke-width="1.2"/><rect x="827" y="19" width="10" height="5" fill="#dfe3ea"/><rect x="827" y="28" width="17" height="5" fill="#aeb4c0"/><path d="M843 40L847 36" stroke="#eee" stroke-width="1.6"/><path d="M852.5 18V36" stroke="#1f1f1f" stroke-width="1.5"/><path d="M860 23L872 17L880 20L868 26Z" fill="#f0f0f0"/><path d="M860 27L872 21L880 24L868 30Z" fill="#d8d8d8"/><path d="M860 31L872 25L880 28L868 34Z" fill="#f0f0f0"/><rect x="873" y="26" width="9" height="11" fill="#f4f4f4" stroke="#888" stroke-width="0.6"/><rect x="875" y="28" width="5" height="4" fill="#3a6ac0"/><path d="M888.5 18V36" stroke="#1f1f1f" stroke-width="1.5"/><rect x="892" y="13" width="28" height="28" fill="#3f7fd8" stroke="#1a2c50" stroke-width="1.5"/><rect x="896" y="20" width="19.500" height="3.500" fill="#e4e0f0"/><rect x="896" y="23.500" width="19.500" height="9" fill="#cfcbe0"/><rect x="899" y="17.500" width="8" height="3" fill="#f2f0fa"/><circle cx="914.500" cy="30.500" r="3.200" fill="#f6d060"/><rect x="913.200" y="33.500" width="2.600" height="3" fill="#e8e8e8"/><rect x="925" y="15" width="23" height="22" fill="#ececec"/><path d="M929 15V37M925 33H948" stroke="#777" stroke-width="0.8"/><path d="M930 32C934 12 938 14 941 24S945 32 948 30" stroke="#334" stroke-width="1.2" fill="none"/><rect x="955" y="16" width="22" height="21" fill="#e4e4e4"/><rect x="957" y="18" width="18" height="5" fill="#f8f8f8" stroke="#555" stroke-width="0.8"/><rect x="957" y="30" width="18" height="5" fill="#bbb" stroke="#555" stroke-width="0.8"/><path d="M966 23V29M963 26.5L966 30L969 26.5" stroke="#222" stroke-width="1.4" fill="none"/><path d="M985 18V36" stroke="#1f1f1f" stroke-width="1.5"/><circle cx="1002" cy="26" r="10.5" fill="#b9c6dc" stroke="#e8ecf4" stroke-width="1.2"/><path d="M992 26H1012M1002 15.5V36.5M994 19C999 23 1005 23 1010 19M994 33C999 29 1005 29 1010 33" stroke="#eef2fa" stroke-width="0.9" fill="none"/><rect x="1003" y="25" width="11" height="12" fill="#f0f0f0" stroke="#5a78b0" stroke-width="0.8"/><rect x="1005" y="27" width="7" height="3" fill="#4a78c8"/><rect x="1005" y="32" width="7" height="3" fill="#4a78c8"/><path d="M1012 40L1016 36" stroke="#eee" stroke-width="1.6"/><path d="M1020.5 18V36" stroke="#1f1f1f" stroke-width="1.5"/><ellipse cx="1037" cy="27" rx="8" ry="6" fill="#dcdcdc"/><path d="M1030 25L1025 21L1027 20L1032 24Z" fill="#dcdcdc"/><path d="M1044 24C1050 22 1050 30 1044 29" stroke="#dcdcdc" stroke-width="1.6" fill="none"/><rect x="1035.5" y="18" width="3" height="3" fill="#dcdcdc"/><rect x="1039" y="26" width="9" height="11" fill="#f4f4f4" stroke="#888" stroke-width="0.6"/><rect x="1041" y="28" width="5" height="4" fill="#3a6ac0"/><rect x="1057" y="15" width="23" height="22" fill="#ececec"/><ellipse cx="1068" cy="28" rx="8" ry="6" fill="#555"/><path d="M1061 26L1056 22L1058 21L1063 25Z" fill="#555"/><path d="M1075 25C1081 23 1081 31 1075 30" stroke="#555" stroke-width="1.6" fill="none"/><rect x="1066.5" y="19" width="3" height="3" fill="#555"/><ellipse cx="1068" cy="28" rx="7.2" ry="5.2" fill="#d8d8d8"/><ellipse cx="1099" cy="27" rx="8" ry="6" fill="#dcdcdc"/><path d="M1092 25L1087 21L1089 20L1094 24Z" fill="#dcdcdc"/><path d="M1106 24C1112 22 1112 30 1106 29" stroke="#dcdcdc" stroke-width="1.6" fill="none"/><rect x="1097.5" y="18" width="3" height="3" fill="#dcdcdc"/><path d="M1107 40L1111 36" stroke="#eee" stroke-width="1.6"/></svg><div class="a" style="left:432px;top:49px;width:266px;height:133px;background:#80bfff"></div><div class="t" style="left:483px;top:71px;font-size:18.8px;line-height:22px;font-weight:bold;color:#f6f6ec;letter-spacing:0.6px">小提示<span style="margin-left:1.5px">：</span></div><div class="t" style="left:438px;top:105.2px;font-size:18.8px;line-height:24px;font-weight:bold;color:#f6f6ec;letter-spacing:1.3px">视图<span style="display:inline-block;width:10px;text-align:center;letter-spacing:0;font-weight:normal;position:relative;top:-2.5px;left:-0.5px">–</span>视口背景<span style="display:inline-block;width:10px;text-align:center;letter-spacing:0;font-weight:normal;position:relative;top:-2.5px;left:-0.5px">–</span>配置视口背景</div><div class="a" style="left:170px;top:9px;width:239px;height:532px;background:#f2f2f2;border:1px solid #c8c8c8;box-shadow:2px 2px 3px rgba(0,0,0,0.35)"></div><div class="mi dis" style="top:15.5px">撤消视图更改(U)</div><div class="sc dis" style="left:auto;right:796.5px;top:15.5px">Shift+Z</div><div class="mi dis" style="top:35.7px">重做视图更改(R)</div><div class="sc dis" style="left:auto;right:796.5px;top:35.7px">Shift+Y</div><div class="mi" style="top:63.3px">视口配置(V)...</div><div class="mi" style="top:83.5px">重画所有视图(V)</div><div class="mi" style="top:110.8px">设置活动视口</div><svg class="a" style="left:392.5px;top:112.6px" width="7" height="10"><path d="M1.5 1.2L5 5L1.5 8.8" stroke="#333" stroke-width="1.1" fill="none"/></svg><div class="mi" style="top:131.4px">保存活动顶视图(S)</div><div class="mi dis" style="top:151.8px">还原活动顶视图(A)</div><div class="mi" style="top:179.2px"><span style="letter-spacing:0.4px">ViewCube</span></div><svg class="a" style="left:392.5px;top:181px" width="7" height="10"><path d="M1.5 1.2L5 5L1.5 8.8" stroke="#333" stroke-width="1.1" fill="none"/></svg><div class="mi" style="top:199.8px"><span style="letter-spacing:0.45px">SteeringWheels</span></div><svg class="a" style="left:392.5px;top:201.6px" width="7" height="10"><path d="M1.5 1.2L5 5L1.5 8.8" stroke="#333" stroke-width="1.1" fill="none"/></svg><div class="mi dis" style="top:227.3px">从视图创建摄影机</div><div class="sc dis" style="left:auto;right:796.5px;top:227.3px">Ctrl+C</div><div class="mi" style="top:254.4px">视口中的材质显示为</div><svg class="a" style="left:392.5px;top:256.2px" width="7" height="10"><path d="M1.5 1.2L5 5L1.5 8.8" stroke="#333" stroke-width="1.1" fill="none"/></svg><div class="mi" style="top:281.7px">视口照明和阴影</div><svg class="a" style="left:392.5px;top:283.5px" width="7" height="10"><path d="M1.5 1.2L5 5L1.5 8.8" stroke="#333" stroke-width="1.1" fill="none"/></svg><div class="mi" style="top:308.4px"><span style="letter-spacing:0.4px">xView</span></div><svg class="a" style="left:392.5px;top:310.2px" width="7" height="10"><path d="M1.5 1.2L5 5L1.5 8.8" stroke="#333" stroke-width="1.1" fill="none"/></svg><div class="a" style="left:173px;top:332.6px;width:231px;height:20.4px;background:#91c9f7"></div><div class="mi" style="top:336.0px">视口背景</div><svg class="a" style="left:392.5px;top:337.8px" width="7" height="10"><path d="M1.5 1.2L5 5L1.5 8.8" stroke="#333" stroke-width="1.1" fill="none"/></svg><div class="chk" style="left:173px;top:359.9px;width:20px;height:20.6px"></div><svg class="a" style="left:177px;top:365.1px" width="12" height="10"><path d="M1.5 4.8L4.6 8L10.5 1.8" stroke="#1d3e7a" stroke-width="1.5" fill="none"/></svg><div class="mi" style="top:363.3px">显示变换 Gizmo(Z)</div><div class="mi" style="top:383.8px">显示重影(O)</div><div class="mi" style="top:404.2px">显示关键点时间(T)</div><div class="mi" style="top:424.6px">明暗处理选定对象(H)</div><div class="mi" style="top:445.1px">显示从属关系(W)</div><div class="chk" style="left:173px;top:469.5px;width:20px;height:20.6px"></div><svg class="a" style="left:177px;top:474.7px" width="12" height="10"><path d="M1.5 4.8L4.6 8L10.5 1.8" stroke="#1d3e7a" stroke-width="1.5" fill="none"/></svg><div class="mi" style="top:472.9px">微调器拖动期间更新(P)</div><div class="chk" style="left:173px;top:490.0px;width:20px;height:20.6px"></div><svg class="a" style="left:177px;top:495.2px" width="12" height="10"><path d="M1.5 4.8L4.6 8L10.5 1.8" stroke="#1d3e7a" stroke-width="1.5" fill="none"/></svg><div class="mi" style="top:493.4px">渐进式显示</div><div class="mi" style="top:521.0px">专家模式(E)</div><div class="sc" style="left:auto;right:796.5px;top:521.0px">Ctrl+X</div><div class="sep" style="top:56.4px"></div><div class="sep" style="top:103.7px"></div><div class="sep" style="top:171.6px"></div><div class="sep" style="top:220.2px"></div><div class="sep" style="top:247.3px"></div><div class="sep" style="top:274.6px"></div><div class="sep" style="top:301.7px"></div><div class="sep" style="top:328.9px"></div><div class="sep" style="top:355.9px"></div><div class="sep" style="top:465.6px"></div><div class="sep" style="top:513.4px"></div><div class="t" style="left:386px;top:84px;font-size:12px;color:#333">`</div><div class="a" style="left:404px;top:330px;width:206px;height:121px;background:#f2f2f2;border:1px solid #c8c8c8;box-shadow:2px 2px 3px rgba(0,0,0,0.35)"></div><div class="mi" style="left:436.5px;top:335.8px">渐变颜色</div><div class="chk" style="left:407px;top:353.2px;width:20px;height:20.2px"></div><svg class="a" style="left:411px;top:358.2px" width="12" height="10"><path d="M1.5 4.8L4.6 8L10.5 1.8" stroke="#1d3e7a" stroke-width="1.5" fill="none"/></svg><div class="mi" style="left:436.5px;top:356.4px">纯色</div><div class="mi" style="left:436.5px;top:384.2px">环境背景</div><div class="a" style="left:407px;top:401.0px;width:200px;height:20.4px;background:#91c9f7"></div><div class="mi" style="left:436.5px;top:404.4px">自定义图像文件</div><div class="mi" style="left:436.5px;top:431.8px">配置视口背景(B)...</div><div class="sc" style="left:560px;right:auto;top:431.8px">Alt+B</div><div class="sep" style="left:432px;width:175px;top:376.5px"></div><div class="sep" style="left:432px;width:175px;top:427.3px"></div><svg class="a" style="left:457px;top:415px" width="16" height="24"><path d="M1.5 1.5V18L5.5 14.2L8.6 21.2L11.4 20L8.4 13.2H14Z" fill="#fff" stroke="#111" stroke-width="1.1" stroke-linejoin="round"/></svg><div class="a" style="left:885px;top:504px;width:235px;height:115px;background:#233055"></div><svg class="a" style="left:892.500px;top:529.300px" width="63.200" height="65.400" viewBox="895 532 58 60"><path d="M903 546V574Q903 583 912 582" stroke="#d4d5dc" stroke-width="4.2" fill="none" stroke-linecap="round"/><path d="M912 582Q917 583 922 580L940 568Q946 562 940 556L922 543Q912 537 912 548V572Q912 576 908.500 576" stroke="#d4d5dc" stroke-width="4.2" fill="none" stroke-linecap="round" stroke-linejoin="round"/><path d="M918 556V568L927 562Z" fill="#d4d5dc"/><path d="M930.5 557V567" stroke="#d4d5dc" stroke-width="2"/></svg><div class="t" style="left:961px;top:533.8px;font-size:30.5px;line-height:36px;font-weight:bold;color:#d9dae0;letter-spacing:5.4px;-webkit-text-stroke:0.5px #d9dae0;transform-origin:0 50%;transform:scaleX(1.075)">溜溜自学</div><div class="t" style="left:963px;top:572px;font-size:12.5px;line-height:16px;color:#d4d5dc;letter-spacing:1.9px;transform-origin:0 0;transform:scaleX(1.145)">ZiXUe.3D66.COM</div><div class="t" style="left:9px;top:16.3px;font-size:29px;line-height:35px;font-weight:700;letter-spacing:0px;transform-origin:0 100%;transform:skewX(-10deg) scaleX(1.5);;color:#0c0c0c;-webkit-text-stroke:4.6px #0c0c0c;text-shadow:1.5px 2px 1.5px #000">秒</div><div class="t" style="left:9px;top:16.3px;font-size:29px;line-height:35px;font-weight:700;letter-spacing:0px;transform-origin:0 100%;transform:skewX(-10deg) scaleX(1.5);;color:#fff;-webkit-text-stroke:0.7px #fff">秒</div><div class="t" style="left:127px;top:16px;font-size:29.5px;line-height:35.5px;font-weight:700;letter-spacing:0px;transform-origin:0 100%;transform:skewX(-10deg) scaleX(1.13);;color:#0c0c0c;-webkit-text-stroke:4.6px #0c0c0c;text-shadow:1.5px 2px 1.5px #000">视频</div><div class="t" style="left:127px;top:16px;font-size:29.5px;line-height:35.5px;font-weight:700;letter-spacing:0px;transform-origin:0 100%;transform:skewX(-10deg) scaleX(1.13);;color:#fff;-webkit-text-stroke:0.7px #fff">视频</div><div class="t" style="left:106px;top:12.5px;font-size:36px;line-height:42px;font-weight:400;letter-spacing:0px;transform-origin:0 100%;transform:skewX(-6deg) scaleX(1.0);;color:#0c0c0c;-webkit-text-stroke:4.6px #0c0c0c;text-shadow:1.5px 2px 1.5px #000">g</div><div class="t" style="left:106px;top:12.5px;font-size:36px;line-height:42px;font-weight:400;letter-spacing:0px;transform-origin:0 100%;transform:skewX(-6deg) scaleX(1.0);;color:#fff;-webkit-text-stroke:1.6px #fff">g</div><div class="t" style="left:88.5px;top:12.5px;font-size:36px;line-height:42px;font-weight:400;letter-spacing:0px;transform-origin:0 100%;transform:skewX(-6deg) scaleX(0.95);;color:#0c0c0c;-webkit-text-stroke:4.6px #0c0c0c;text-shadow:1.5px 2px 1.5px #000">n</div><div class="t" style="left:88.5px;top:12.5px;font-size:36px;line-height:42px;font-weight:400;letter-spacing:0px;transform-origin:0 100%;transform:skewX(-6deg) scaleX(0.95);;color:#fff;-webkit-text-stroke:1.6px #fff">n</div><div class="t" style="left:49px;top:12.5px;font-size:36px;line-height:42px;font-weight:400;letter-spacing:0px;transform-origin:0 100%;transform:skewX(-8deg) scaleX(1.1);;color:#0c0c0c;-webkit-text-stroke:4.6px #0c0c0c;text-shadow:1.5px 2px 1.5px #000">d</div><div class="t" style="left:49px;top:12.5px;font-size:36px;line-height:42px;font-weight:400;letter-spacing:0px;transform-origin:0 100%;transform:skewX(-8deg) scaleX(1.1);;color:#fff;-webkit-text-stroke:1.6px #fff">d</div><svg class="a" style="left:62px;top:10px" width="34" height="44" viewBox="62 10 34 44"><circle cx="79.3" cy="37" r="11.8" fill="#0c0c0c"/><path d="M79.500 19L82.300 24L87 18.500" stroke="#0c0c0c" stroke-width="5.500" fill="none" stroke-linecap="round" stroke-linejoin="round"/><circle cx="79.3" cy="36.8" r="9.5" fill="#2f86ea"/><path d="M75.700 31.400L84.500 36.800L75.700 42.200Z" fill="#f4fbf0"/><path d="M79.500 19L82.300 24L87 18.500" stroke="#f2d21c" stroke-width="2.500" fill="none" stroke-linecap="round" stroke-linejoin="round"/></svg></div></body></html>
